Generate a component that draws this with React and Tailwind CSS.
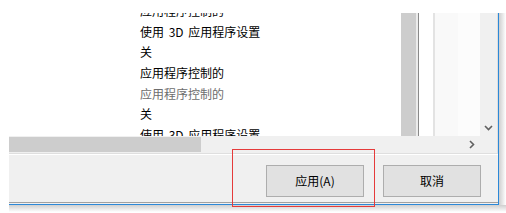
// App.jsx
const font = { fontFamily: '"Noto Sans CJK SC", "Noto Sans", sans-serif' };

const items = [
  { text: '应用程序控制的' },
  { text: '使用 3D 应用程序设置' },
  { text: '关' },
  { text: '应用程序控制的' },
  { text: '应用程序控制的', dim: true },
  { text: '关' },
  { text: '使用 3D 应用程序设置' },
];

const ChevronDown = () => (
  <svg width="9" height="6" viewBox="0 0 9 6" className="block">
    <path d="M1 1 L4.5 4.5 L8 1" fill="none" stroke="#606060" strokeWidth="1.6" />
  </svg>
);

const ChevronRight = () => (
  <svg width="6" height="9" viewBox="0 0 6 9" className="block">
    <path d="M1 1 L4.5 4.5 L1 8" fill="none" stroke="#606060" strokeWidth="1.6" />
  </svg>
);

const App = () => {
  return (
    <div className="relative w-[506px] h-[213px] overflow-hidden bg-white text-[12px] text-black" style={font}>
      {/* blank strip above the clipped list */}
      <div className="h-[13px]" />

      <div className="flex">
        <div className="w-[9px] flex-shrink-0" />

        {/* dialog */}
        <div className="w-[490px] flex flex-col border-r border-b border-[#2b88d8]">
          {/* scroll area */}
          <div className="flex h-[140px] border-r border-[#dedede]">
            <div className="flex flex-col w-[471px]">
              <div className="flex h-[123px] overflow-hidden">
                {/* list */}
                <div className="w-[392px] bg-white pl-[131px] overflow-hidden">
                  <div className="-mt-[12px]">
                    {items.map((it, i) => (
                      <div
                        key={i}
                        className={`h-[20.7px] leading-[20.7px] whitespace-nowrap [word-spacing:2px] ${it.dim ? 'text-[#6d6d6d]' : 'text-black'}`}
                      >
                        {it.text}
                      </div>
                    ))}
                  </div>
                </div>
                {/* columns on the right */}
                <div className="w-[15px] bg-[#cdcdcd]" />
                <div className="w-[2px] bg-[#ececec]" />
                <div className="w-[1px] bg-[#8a8a8a]" />
                <div className="w-[14px] bg-white" />
                <div className="w-[2px] bg-[#e3e3e3]" />
                <div className="w-[23px] bg-[#f9f9f9]" />
                <div className="w-[22px] bg-[#fcfcfc]" />
              </div>
              {/* horizontal scrollbar */}
              <div className="flex items-center h-[17px] bg-[#f0f0f0]">
                <div className="w-[192px] h-[15px] bg-[#cdcdcd]" />
                <div className="flex-1" />
                <div className="w-[17px] flex justify-center">
                  <ChevronRight />
                </div>
              </div>
            </div>
            {/* vertical scrollbar */}
            <div className="w-[17px] bg-[#f0f0f0] flex flex-col items-center">
              <div className="flex-1" />
              <div className="h-[17px] flex items-center mb-[17px]">
                <ChevronDown />
              </div>
            </div>
          </div>

          <div className="h-[1px] bg-[#dfdfdf]" />
          <div className="h-[1px] bg-white" />

          {/* button bar */}
          <div className="h-[48px] bg-[#f0f0f0] flex justify-end items-start pt-[10px] pr-[17px] gap-[19px] border-b border-[#a0a0a0]">
            <button className="w-[98px] h-[32px] bg-[#e1e1e1] border border-[#adadad] flex items-center justify-center">
              应用(A)
            </button>
            <button className="w-[98px] h-[32px] bg-[#e1e1e1] border border-[#adadad] flex items-center justify-center">
              取消
            </button>
          </div>
          <div className="h-[1px] bg-[#f0f0f0]" />
        </div>

        {/* right shadow */}
        <div className="w-[7px] bg-linear-to-r from-[#cfcfcf] to-white" />
      </div>

      {/* bottom shadow */}
      <div className="flex">
        <div className="w-[9px]" />
        <div className="flex-1 h-[7px] bg-linear-to-b from-[#cfcfcf] to-white" />
      </div>

      {/* red highlight box */}
      <div className="absolute left-[232px] top-[149px] w-[143px] h-[58px] border border-[#e53b3b]" />
    </div>
  );
};

export default App;
